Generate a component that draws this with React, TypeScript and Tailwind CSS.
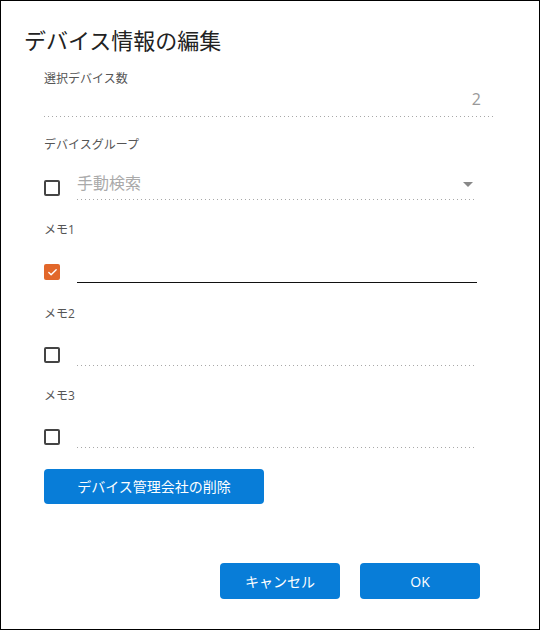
import { Check } from 'lucide-react'

const FONT = "font-['Open_Sans','Noto_Sans_CJK_JP',sans-serif]"

// dotted underline used by read-only / empty fields
function DotLine({ className = '' }: { className?: string }) {
  return (
    <div
      className={`h-px bg-[linear-gradient(to_right,#a8a8a8_1px,transparent_1px)] bg-[length:4px_1px] bg-repeat-x ${className}`}
    />
  )
}

function Box({ checked = false }: { checked?: boolean }) {
  if (checked) {
    return (
      <div className="mt-[9px] flex h-4 w-4 shrink-0 items-center justify-center rounded-[2px] bg-[#e2672a]">
        <Check size={11} strokeWidth={3} className="text-white" />
      </div>
    )
  }
  return <div className="mt-[9px] h-4 w-4 shrink-0 rounded-[2px] border-2 border-[#444]" />
}

function Label({ text, className = '' }: { text: string; className?: string }) {
  return <div className={`text-[12px] leading-[20px] text-[#555] ${className}`}>{text}</div>
}

function MemoRow({ checked }: { checked?: boolean }) {
  return (
    <div className="flex items-start">
      <Box checked={checked} />
      <div className="ml-[17px] w-[400px]">
        <div className="h-[27px]" />
        {checked ? <div className="h-px bg-[#111]" /> : <DotLine />}
      </div>
    </div>
  )
}

export default function App() {
  return (
    <div className={`flex h-[630px] w-[540px] flex-col border border-black bg-white ${FONT}`}>
      <h1 className="pl-[23px] pt-[23px] text-[22px] leading-[32px] font-normal text-[#222]">
        デバイス情報の編集
      </h1>

      <div className="pl-[43px]">
        <Label text="選択デバイス数" className="mt-[13px]" />
        <div className="w-[449px]">
          <div className="h-[27px] pr-[12px] text-right text-[16px] leading-[20px] text-[#999]">2</div>
          <DotLine />
        </div>

        <Label text="デバイスグループ" className="mt-[18px]" />
        <div className="mt-[16px] flex items-start">
          <Box />
          <div className="ml-[17px] w-[397px]">
            <div className="flex h-[28px] items-start justify-between">
              <span className="text-[16px] leading-[24px] text-[#aaa]">手動検索</span>
              <svg width="10" height="5" viewBox="0 0 10 5" className="mr-px mt-[11px]">
                <path d="M0 0h10L5 5z" fill="#888" />
              </svg>
            </div>
            <DotLine />
          </div>
        </div>

        <Label text="メモ1" className="mt-[20px]" />
        <div className="mt-[15px]">
          <MemoRow checked />
        </div>

        <Label text="メモ2" className="mt-[21px]" />
        <div className="mt-[14px]">
          <MemoRow />
        </div>

        <Label text="メモ3" className="mt-[20px]" />
        <div className="mt-[14px]">
          <MemoRow />
        </div>

        <button className="mt-[21px] h-[35px] w-[220px] rounded-[4px] bg-[#087dd8] text-[14px] text-white">
          デバイス管理会社の削除
        </button>
      </div>

      <div className="mt-[59px] flex justify-end gap-[20px] pr-[59px]">
        <button className="h-[36px] w-[120px] rounded-[4px] bg-[#087dd8] text-[14px] text-white">
          キャンセル
        </button>
        <button className="h-[36px] w-[120px] rounded-[4px] bg-[#087dd8] text-[14px] text-white">
          OK
        </button>
      </div>
    </div>
  )
}
